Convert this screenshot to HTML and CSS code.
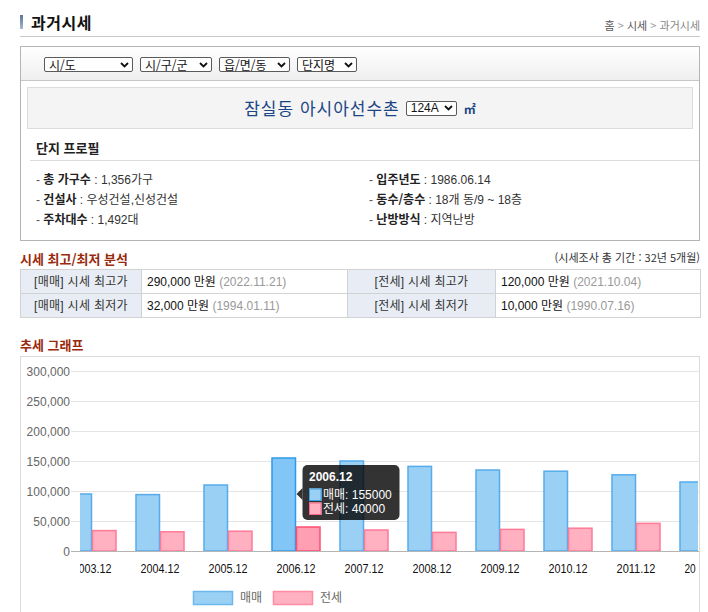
FILE: index.html
```html
<!DOCTYPE html>
<html lang="ko">
<head>
<meta charset="utf-8">
<title>과거시세</title>
<link rel="stylesheet" href="styles.css">
</head>
<body>
<div class="page">
  <div class="page-head">
    <h2 class="page-title"><span class="title-bar"></span>과거시세</h2>
    <div class="crumb">홈 <span class="gt">&gt;</span> 시세 <span class="gt">&gt;</span> <span class="cur">과거시세</span></div>
  </div>

  <div class="box">
    <div class="filter-row">
      <div class="sel w-sido">시/도<svg class="chev" width="9" height="6" viewBox="0 0 9 6"><polyline points="1,1 4.5,4.5 8,1"/></svg></div>
      <div class="sel w-gu">시/구/군<svg class="chev" width="9" height="6" viewBox="0 0 9 6"><polyline points="1,1 4.5,4.5 8,1"/></svg></div>
      <div class="sel w-dong">읍/면/동<svg class="chev" width="9" height="6" viewBox="0 0 9 6"><polyline points="1,1 4.5,4.5 8,1"/></svg></div>
      <div class="sel w-apt">단지명<svg class="chev" width="9" height="6" viewBox="0 0 9 6"><polyline points="1,1 4.5,4.5 8,1"/></svg></div>
    </div>

    <div class="apt-title">
      <span class="apt-name">잠실동 아시아선수촌</span>
      <div class="sel w-size">124A<svg class="chev" width="9" height="6" viewBox="0 0 9 6"><polyline points="1,1 4.5,4.5 8,1"/></svg></div>
      <span class="unit">㎡</span>
    </div>

    <div class="profile-head"><h3>단지 프로필</h3></div>
    <div class="profile-grid">
      <div class="item"><span class="dash">-</span> <b>총 가구수</b> : 1,356가구</div>
      <div class="item"><span class="dash">-</span> <b>입주년도</b> : 1986.06.14</div>
      <div class="item"><span class="dash">-</span> <b>건설사</b> : 우성건설,신성건설</div>
      <div class="item"><span class="dash">-</span> <b>동수/층수</b> : 18개 동/9 ~ 18층</div>
      <div class="item"><span class="dash">-</span> <b>주차대수</b> : 1,492대</div>
      <div class="item"><span class="dash">-</span> <b>난방방식</b> : 지역난방</div>
    </div>
  </div>

  <div class="sec-head">
    <h3 class="sec-title">시세 최고/최저 분석</h3>
    <span class="sec-note">(시세조사 총 기간 : 32년 5개월)</span>
  </div>
  <table class="price-table">
    <colgroup><col class="c1"><col class="c2"><col class="c3"><col class="c4"></colgroup>
    <tr>
      <th>[매매] 시세 최고가</th>
      <td>290,000 만원 <span class="date">(2022.11.21)</span></td>
      <th>[전세] 시세 최고가</th>
      <td>120,000 만원 <span class="date">(2021.10.04)</span></td>
    </tr>
    <tr>
      <th>[매매] 시세 최저가</th>
      <td>32,000 만원 <span class="date">(1994.01.11)</span></td>
      <th>[전세] 시세 최저가</th>
      <td>10,000 만원 <span class="date">(1990.07.16)</span></td>
    </tr>
  </table>

  <div class="sec-head chart-head">
    <h3 class="sec-title">추세 그래프</h3>
  </div>
  <div class="chart-box">
    <svg class="chart" width="678" height="262" viewBox="21 358 678 262">
      <defs>
        <clipPath id="plot"><rect x="80" y="358" width="618" height="262"/></clipPath>
      </defs>
      <g class="grid">
        <line x1="71" y1="372.5" x2="699" y2="372.5"/>
        <line x1="71" y1="402.5" x2="699" y2="402.5"/>
        <line x1="71" y1="432.5" x2="699" y2="432.5"/>
        <line x1="71" y1="462.5" x2="699" y2="462.5"/>
        <line x1="71" y1="492.5" x2="699" y2="492.5"/>
        <line x1="71" y1="522.5" x2="699" y2="522.5"/>
      </g>
      <g class="ylab">
        <text x="70" y="376.5">300,000</text>
        <text x="70" y="406.5">250,000</text>
        <text x="70" y="436.5">200,000</text>
        <text x="70" y="466.5">150,000</text>
        <text x="70" y="496.5">100,000</text>
        <text x="70" y="526.5">50,000</text>
        <text x="70" y="556.5">0</text>
      </g>
      <g clip-path="url(#plot)">
        <g class="bar-a">
          <rect x="68" y="495" width="23.5" height="57"/>
          <rect x="136" y="495.6" width="23.5" height="56.4"/>
          <rect x="204" y="486" width="23.5" height="66"/>
          <rect x="340" y="462" width="23.5" height="90"/>
          <rect x="408" y="467.4" width="23.5" height="84.6"/>
          <rect x="476" y="471" width="23.5" height="81"/>
          <rect x="544" y="472.2" width="23.5" height="79.8"/>
          <rect x="612" y="475.8" width="23.5" height="76.2"/>
          <rect x="680" y="483" width="23.5" height="69"/>
        </g>
        <g class="bar-b">
          <rect x="92.5" y="531.6" width="23.5" height="20.4"/>
          <rect x="160.5" y="532.8" width="23.5" height="19.2"/>
          <rect x="228.5" y="532.2" width="23.5" height="19.8"/>
          <rect x="364.5" y="531" width="23.5" height="21"/>
          <rect x="432.5" y="533.4" width="23.5" height="18.6"/>
          <rect x="500.5" y="530.4" width="23.5" height="21.6"/>
          <rect x="568.5" y="529.2" width="23.5" height="22.8"/>
          <rect x="636.5" y="524.4" width="23.5" height="27.6"/>
        </g>
        <rect class="bar-a-hover" x="272" y="459" width="23.5" height="93"/>
        <rect class="bar-b-hover" x="296.5" y="528" width="23.5" height="24"/>
        <g class="xlab">
          <text x="92" y="574" textLength="39" lengthAdjust="spacingAndGlyphs">2003.12</text>
          <text x="160" y="574" textLength="39" lengthAdjust="spacingAndGlyphs">2004.12</text>
          <text x="228" y="574" textLength="39" lengthAdjust="spacingAndGlyphs">2005.12</text>
          <text x="296" y="574" textLength="39" lengthAdjust="spacingAndGlyphs">2006.12</text>
          <text x="364" y="574" textLength="39" lengthAdjust="spacingAndGlyphs">2007.12</text>
          <text x="432" y="574" textLength="39" lengthAdjust="spacingAndGlyphs">2008.12</text>
          <text x="500" y="574" textLength="39" lengthAdjust="spacingAndGlyphs">2009.12</text>
          <text x="568" y="574" textLength="39" lengthAdjust="spacingAndGlyphs">2010.12</text>
          <text x="636" y="574" textLength="39" lengthAdjust="spacingAndGlyphs">2011.12</text>
          <text class="xlab-start" x="684.5" y="574" textLength="11.2" lengthAdjust="spacingAndGlyphs">20</text>
        </g>
      </g>
      <line class="zero" x1="71" y1="552.5" x2="699" y2="552.5"/>

      <g class="tooltip">
        <rect class="tip-bg" x="302.5" y="466" width="97" height="55" rx="5"/>
        <polygon class="tip-bg" points="302.5,489 296.5,495 302.5,501"/>
        <text class="tip-title" x="309" y="481.5">2006.12</text>
        <rect x="309" y="489.5" width="12.5" height="12.5" fill="#fff"/>
        <rect class="tip-a" x="309.5" y="490" width="11.5" height="11.5"/>
        <rect x="309" y="503.5" width="12.5" height="12.5" fill="#fff"/>
        <rect class="tip-b" x="309.5" y="504" width="11.5" height="11.5"/>
        <text class="tip-item" x="323" y="500">매매: 155000</text>
        <text class="tip-item" x="323" y="514">전세: 40000</text>
      </g>

      <g class="legend">
        <rect class="leg-a" x="193.5" y="592.5" width="39" height="13"/>
        <text x="240" y="603">매매</text>
        <rect class="leg-b" x="273.5" y="592.5" width="39" height="13"/>
        <text x="320" y="603">전세</text>
      </g>
    </svg>
  </div>
</div>
</body>
</html>
```

FILE: styles.css
```css
* { box-sizing: border-box; }

body {
  margin: 0;
  background: #fff;
  font-family: "Liberation Sans", "Noto Sans CJK KR", sans-serif;
  font-size: 12px;
  color: #333;
}

.page {
  width: 680px;
  margin-left: 20px;
}

/* header */
.page-head {
  display: flex;
  justify-content: space-between;
  height: 37px;
  border-bottom: 1px solid #c8c8c8;
}

.page-title {
  margin: 0;
  padding-top: 12px;
  display: flex;
  align-items: center;
  height: 32px;
  font-family: "Noto Sans CJK KR", sans-serif;
  font-size: 16px;
  font-weight: bold;
  color: #111;
  line-height: 20px;
  letter-spacing: 0.5px;
}

.title-bar {
  display: inline-block;
  width: 3px;
  height: 14px;
  margin-right: 8px;
  background: linear-gradient(#5b7395, #a9b9cd);
}

.crumb {
  padding-top: 17px;
  line-height: 16px;
  font-family: "Noto Sans CJK KR", sans-serif;
  font-size: 11px;
  color: #555;
}

.crumb .gt { color: #999; }
.crumb .cur { color: #888; }

/* box */
.box {
  margin-top: 9px;
  border: 1px solid #b4b4b4;
}

.filter-row {
  display: flex;
  align-items: center;
  gap: 7px;
  height: 34px;
  padding: 2px 0 0 23px;
  background: linear-gradient(#ffffff, #efefef);
  border-bottom: 1px solid #c8c8c8;
}

.sel {
  display: flex;
  align-items: center;
  justify-content: space-between;
  height: 15px;
  padding: 0 3px 0 4px;
  border: 1px solid #5a5a5a;
  border-radius: 2px;
  background: #fff;
  font-family: "Noto Sans CJK KR", sans-serif;
  font-size: 12px;
  line-height: 13px;
  color: #111;
}

.chev {
  fill: none;
  stroke: #111;
  stroke-width: 1.8;
}

.w-sido { width: 89px; }
.w-gu { width: 72px; }
.w-dong { width: 71px; }
.w-apt { width: 60px; }
.w-size { width: 51px; margin-left: 6px; font-family: "Liberation Sans", sans-serif; }

.apt-title {
  display: flex;
  justify-content: center;
  align-items: center;
  height: 42px;
  margin: 6px 6px 0;
  border: 1px solid #dcdcdc;
  background: #f4f4f4;
}

.apt-name {
  font-family: "Noto Sans CJK KR", sans-serif;
  font-size: 17px;
  letter-spacing: 1px;
  color: #1b4585;
  line-height: 20px;
}

.unit {
  margin-left: 7px;
  font-size: 12px;
  font-weight: bold;
  color: #1b4585;
}

.profile-head {
  margin-left: 9px;
  padding: 9px 0 2px 6px;
  border-bottom: 1px solid #dcdcdc;
}

.profile-head h3 {
  margin: 0;
  height: 20px;
  font-family: "Noto Sans CJK KR", sans-serif;
  font-size: 13px;
  font-weight: bold;
  line-height: 20px;
  color: #222;
}

.profile-grid {
  display: grid;
  grid-template-columns: 333px 1fr;
  padding: 8px 0 11px 15px;
  font-size: 12px;
  color: #333;
}

.item {
  height: 20px;
  line-height: 20px;
  white-space: nowrap;
}

.profile-grid b {
  font-family: "Noto Sans CJK KR", sans-serif;
  color: #222;
}

.dash { color: #555; }

/* section heads */
.sec-head {
  display: flex;
  justify-content: space-between;
  align-items: center;
  height: 20px;
  margin-top: 8px;
}

.sec-title {
  margin: 0;
  height: 20px;
  font-family: "Noto Sans CJK KR", sans-serif;
  font-size: 13px;
  font-weight: bold;
  line-height: 20px;
  color: #9a2a0e;
}

.sec-note {
  height: 16px;
  font-family: "Noto Sans CJK KR", sans-serif;
  font-size: 11px;
  line-height: 16px;
  color: #333;
  margin-top: -4px;
}

.chart-head {
  margin-top: 17px;
  margin-bottom: 1px;
}

/* table */
.price-table {
  width: 680px;
  table-layout: fixed;
  border-collapse: collapse;
}

.price-table .c1 { width: 121px; }
.price-table .c2 { width: 206px; }
.price-table .c3 { width: 148px; }
.price-table .c4 { width: 205px; }

.price-table th,
.price-table td {
  height: 24px;
  padding: 0;
  border: 1px solid #d2d2d2;
  font-size: 12px;
  line-height: 16px;
  white-space: nowrap;
}

.price-table th {
  background: #e8edf5;
  font-weight: normal;
  text-align: center;
  color: #333;
  letter-spacing: 0.3px;
}

.price-table td {
  padding-left: 5px;
  color: #111;
}

.price-table .date { color: #999; }

/* chart */
.chart-box {
  height: 264px;
  border: 1px solid #dcdcdc;
  border-bottom: none;
  overflow: hidden;
}

.chart { display: block; }

.grid line { stroke: #e4e4e4; stroke-width: 1; }
.zero { stroke: #b5b5b5; stroke-width: 1; }

.ylab text {
  font-family: "Liberation Sans", sans-serif;
  font-size: 12px;
  fill: #666;
  text-anchor: end;
}

.xlab text {
  font-family: "Liberation Sans", sans-serif;
  font-size: 13px;
  fill: #111;
  text-anchor: middle;
}

.xlab .xlab-start { text-anchor: start; }

.bar-a rect { fill: #9bd0f5; stroke: #55aceb; stroke-width: 1.5; }
.bar-b rect { fill: #ffb1c1; stroke: #ff7a96; stroke-width: 1.5; }
.bar-a-hover { fill: #82c6f8; stroke: #2f9be8; stroke-width: 1.5; }
.bar-b-hover { fill: #ff9fb3; stroke: #ff4d72; stroke-width: 1.5; }

.tip-bg { fill: rgba(0, 0, 0, 0.8); }

.tip-title {
  font-family: "Liberation Sans", sans-serif;
  font-size: 12px;
  font-weight: bold;
  fill: #fff;
}

.tip-item {
  font-family: "Liberation Sans", "Noto Sans CJK KR", sans-serif;
  font-size: 12px;
  fill: #fff;
}

.tip-a { fill: #9bd0f5; stroke: #36a2eb; stroke-width: 1; }
.tip-b { fill: #ffb1c1; stroke: #ff6384; stroke-width: 1; }

.leg-a { fill: #9bd0f5; stroke: #6bb8ef; stroke-width: 1.5; }
.leg-b { fill: #ffb1c1; stroke: #ff8ba4; stroke-width: 1.5; }

.legend text {
  font-family: "Noto Sans CJK KR", sans-serif;
  font-size: 12px;
  fill: #666;
}
```
